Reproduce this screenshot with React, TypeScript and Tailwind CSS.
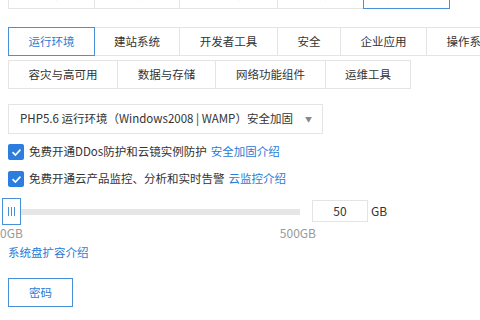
import React from 'react';

const font = { fontFamily: '"Noto Sans CJK SC", "Liberation Sans", sans-serif' };

type Tab = { label: string; w: string; active?: boolean };

const topRow: Tab[] = [
    { label: '热门镜像', w: 'w-[87px]' },
    { label: '公共镜像', w: 'w-[86px]' },
    { label: '自定义镜像', w: 'w-[99px]' },
    { label: '共享镜像', w: 'w-[87px]' },
    { label: '镜像市场', w: 'w-[87px]', active: true },
];

const catRow1: Tab[] = [
    { label: '运行环境', w: 'w-[87px]', active: true },
    { label: '建站系统', w: 'w-[86px]' },
    { label: '开发者工具', w: 'w-[99px]' },
    { label: '安全', w: 'w-[64px]' },
    { label: '企业应用', w: 'w-[87px]' },
    { label: '操作系统', w: 'w-[87px]' },
];

const catRow2: Tab[] = [
    { label: '容灾与高可用', w: 'w-[110px]' },
    { label: '数据与存储', w: 'w-[99px]' },
    { label: '网络功能组件', w: 'w-[111px]' },
    { label: '运维工具', w: 'w-[86px]' },
];

const TabRow: React.FC<{ tabs: Tab[]; className?: string }> = ({ tabs, className }) => (
    <div className={`flex ${className ?? ''}`}>
        {tabs.map((t, i) => (
            <div
                key={t.label}
                className={`${t.w} ${i > 0 ? '-ml-px' : ''} shrink-0 h-[29px] flex items-center justify-center text-[11.5px] border ${
                    t.active ? 'relative z-10 border-[#4a90d9] text-[#2a7ad6]' : 'border-[#e4e4e4] text-[#333]'
                }`}
            >
                {t.label}
            </div>
        ))}
    </div>
);

const Check: React.FC = () => (
    <span className="w-4 h-4 rounded-[2px] bg-[#2b7de0] flex items-center justify-center shrink-0">
        <svg width="11" height="11" viewBox="0 0 12 12" fill="none">
            <path d="M2.2 6.2 L4.9 8.8 L9.8 3.4" stroke="white" strokeWidth="1.8" strokeLinecap="round" strokeLinejoin="round" />
        </svg>
    </span>
);

export default function App() {
    return (
        <div className="w-[480px] h-[320px] overflow-hidden bg-white" style={font}>
            <div className="pl-2 -mt-[20px]">
                <TabRow tabs={topRow} />
                <TabRow tabs={catRow1} className="mt-[18px]" />
                <TabRow tabs={catRow2} className="mt-[4px]" />
            </div>

            {/* image select */}
            <div className="ml-2 mt-[15px] w-[315px] h-[30px] border border-[#e4e4e4] flex items-center pl-[11px] pr-[10px] text-[11.5px] text-[#333]">
                <span className="flex-1 whitespace-nowrap">PHP5.6 运行环境（Windows2008 | WAMP）安全加固</span>
                <span className="text-[7px] text-[#888]">▼</span>
            </div>

            <div className="ml-2 mt-[10px] h-4 flex items-center gap-[5px] text-[11.5px] text-[#333]">
                <Check />
                <span>免费开通DDos防护和云镜实例防护</span>
                <span className="text-[#2a7ad6] -ml-[1px]">安全加固介绍</span>
            </div>
            <div className="ml-2 mt-[11px] h-4 flex items-center gap-[5px] text-[11.5px] text-[#333]">
                <Check />
                <span>免费开通云产品监控、分析和实时告警</span>
                <span className="text-[#2a7ad6] -ml-[1px]">云监控介绍</span>
            </div>

            {/* disk slider */}
            <div className="mt-[11px] flex items-start">
                <div className="w-[300px] shrink-0">
                    <div className="flex items-center pl-[2px] h-[27px]">
                        <div className="w-[19px] h-[27px] border border-[#4a90d9] bg-white flex items-center justify-center gap-[2px] shrink-0">
                            <span className="w-px h-[9px] bg-[#4a90d9]" />
                            <span className="w-px h-[9px] bg-[#4a90d9]" />
                            <span className="w-px h-[9px] bg-[#4a90d9]" />
                        </div>
                        <div className="flex-1 h-[6px] bg-[#e6e6e6]" />
                    </div>
                    <div className="flex justify-between text-[12px] text-[#999] leading-[14px] mt-[1px] -mr-[16px]">
                        <span>0GB</span>
                        <span>500GB</span>
                    </div>
                </div>
                <div className="ml-[12px] mt-[2px] w-[56px] h-[22px] border border-[#e4e4e4] flex items-center justify-center text-[12px] text-[#333]">
                    50
                </div>
                <span className="ml-[3px] mt-[4px] text-[12px] text-[#333]">GB</span>
            </div>

            <div className="ml-2 mt-[4px] text-[11.5px] leading-[16px] text-[#2a7ad6]">系统盘扩容介绍</div>

            <button className="ml-2 mt-[18px] w-[65px] h-[29px] border border-[#4a90d9] text-[11.5px] text-[#2a7ad6] flex items-center justify-center">
                密码
            </button>
        </div>
    );
}
